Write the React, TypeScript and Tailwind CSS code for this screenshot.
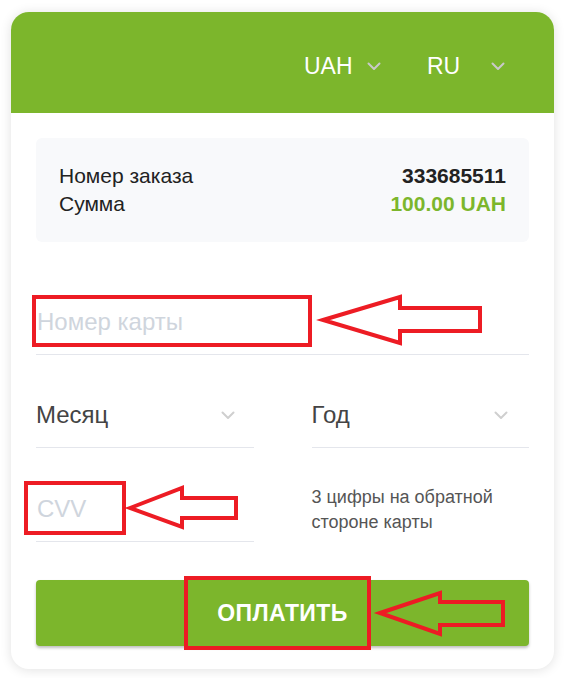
import React from 'react'

const Chevron = ({ className = '' }: { className?: string }) => (
  <svg width="14" height="9" viewBox="0 0 14 9" fill="none" className={className}>
    <polyline points="1.5,1.5 7,7 12.5,1.5" stroke="currentColor" strokeWidth="2" strokeLinecap="round" strokeLinejoin="round" />
  </svg>
)

// red paint-style annotations drawn over the form
const Marks = () => (
  <svg className="absolute inset-0 pointer-events-none" width="566" height="678" viewBox="0 0 566 678" fill="none">
    <g stroke="#ed1c24" strokeWidth="4">
      <rect x="34" y="297" width="276" height="48" />
      <rect x="26" y="483" width="98" height="50" />
      <rect x="186" y="578" width="183" height="70" />
      <polygon points="323,320 400,297 400,308 480,308 480,331 400,331 400,343" strokeLinejoin="miter" />
      <polygon points="130,508 182,488 182,498 236,498 236,518 182,518 182,527" strokeLinejoin="miter" />
      <polygon points="380,613 440,593 440,602 503,602 503,625 440,625 440,634" strokeLinejoin="miter" />
    </g>
  </svg>
)

export default function App() {
  return (
    <div className="relative w-[566px] h-[678px] bg-white pt-[12px] pl-[11px] pr-[12px] font-['Liberation_Sans',Arial,sans-serif]">
      <div className="w-full h-[657px] rounded-[18px] bg-white overflow-hidden shadow-[0_1px_12px_rgba(0,0,0,0.12)] flex flex-col">
        <div className="h-[101px] bg-[#7cb62c] flex items-center justify-end gap-[46px] pr-[49px] pt-[8px]">
          <div className="w-[77px] flex items-center justify-between text-white text-[23px]">
            <span>UAH</span>
            <Chevron className="text-[#c9c9c9]" />
          </div>
          <div className="w-[78px] flex items-center justify-between text-white text-[23px]">
            <span>RU</span>
            <Chevron className="text-[#c9c9c9]" />
          </div>
        </div>

        <div className="flex flex-col px-[25px] pt-[25px]">
          <div className="bg-[#f8f9fb] rounded-[6px] px-[23px] py-[24px] text-[21px] leading-[28px] text-[#222]">
            <div className="flex justify-between">
              <span>Номер заказа</span>
              <span className="font-bold">333685511</span>
            </div>
            <div className="flex justify-between">
              <span>Сумма</span>
              <span className="font-bold text-[#7cb62c]">100.00 UAH</span>
            </div>
          </div>

          <div className="mt-[48px] h-[65px] border-b border-[#e4e6ec] flex items-center text-[24px] text-[#cfd5dd] pl-[1px]">
            Номер карты
          </div>

          <div className="mt-[28px] grid grid-cols-2 gap-[58px]">
            <div className="h-[65px] border-b border-[#e4e6ec] flex items-center justify-between pr-[19px] text-[24px] text-[#444]">
              <span>Месяц</span>
              <Chevron className="text-[#cfcfcf]" />
            </div>
            <div className="h-[65px] border-b border-[#e4e6ec] flex items-center justify-between pr-[21px] text-[24px] text-[#444]">
              <span>Год</span>
              <Chevron className="text-[#cfcfcf]" />
            </div>
          </div>

          <div className="mt-[29px] grid grid-cols-2 gap-[58px]">
            <div className="h-[65px] border-b border-[#e4e6ec] flex items-center text-[24px] text-[#cfd5dd] pl-[1px]">
              CVV
            </div>
            <div className="flex items-center text-[18px] leading-[25px] text-[#555]">
              3 цифры на обратной стороне карты
            </div>
          </div>

          <button className="mt-[38px] h-[66px] rounded-[4px] bg-[#7cb62c] shadow-[0_2px_3px_rgba(0,0,0,0.25)] text-white text-[23px] tracking-[0.4px] font-bold">
            ОПЛАТИТЬ
          </button>
        </div>
      </div>
      <Marks />
    </div>
  )
}
